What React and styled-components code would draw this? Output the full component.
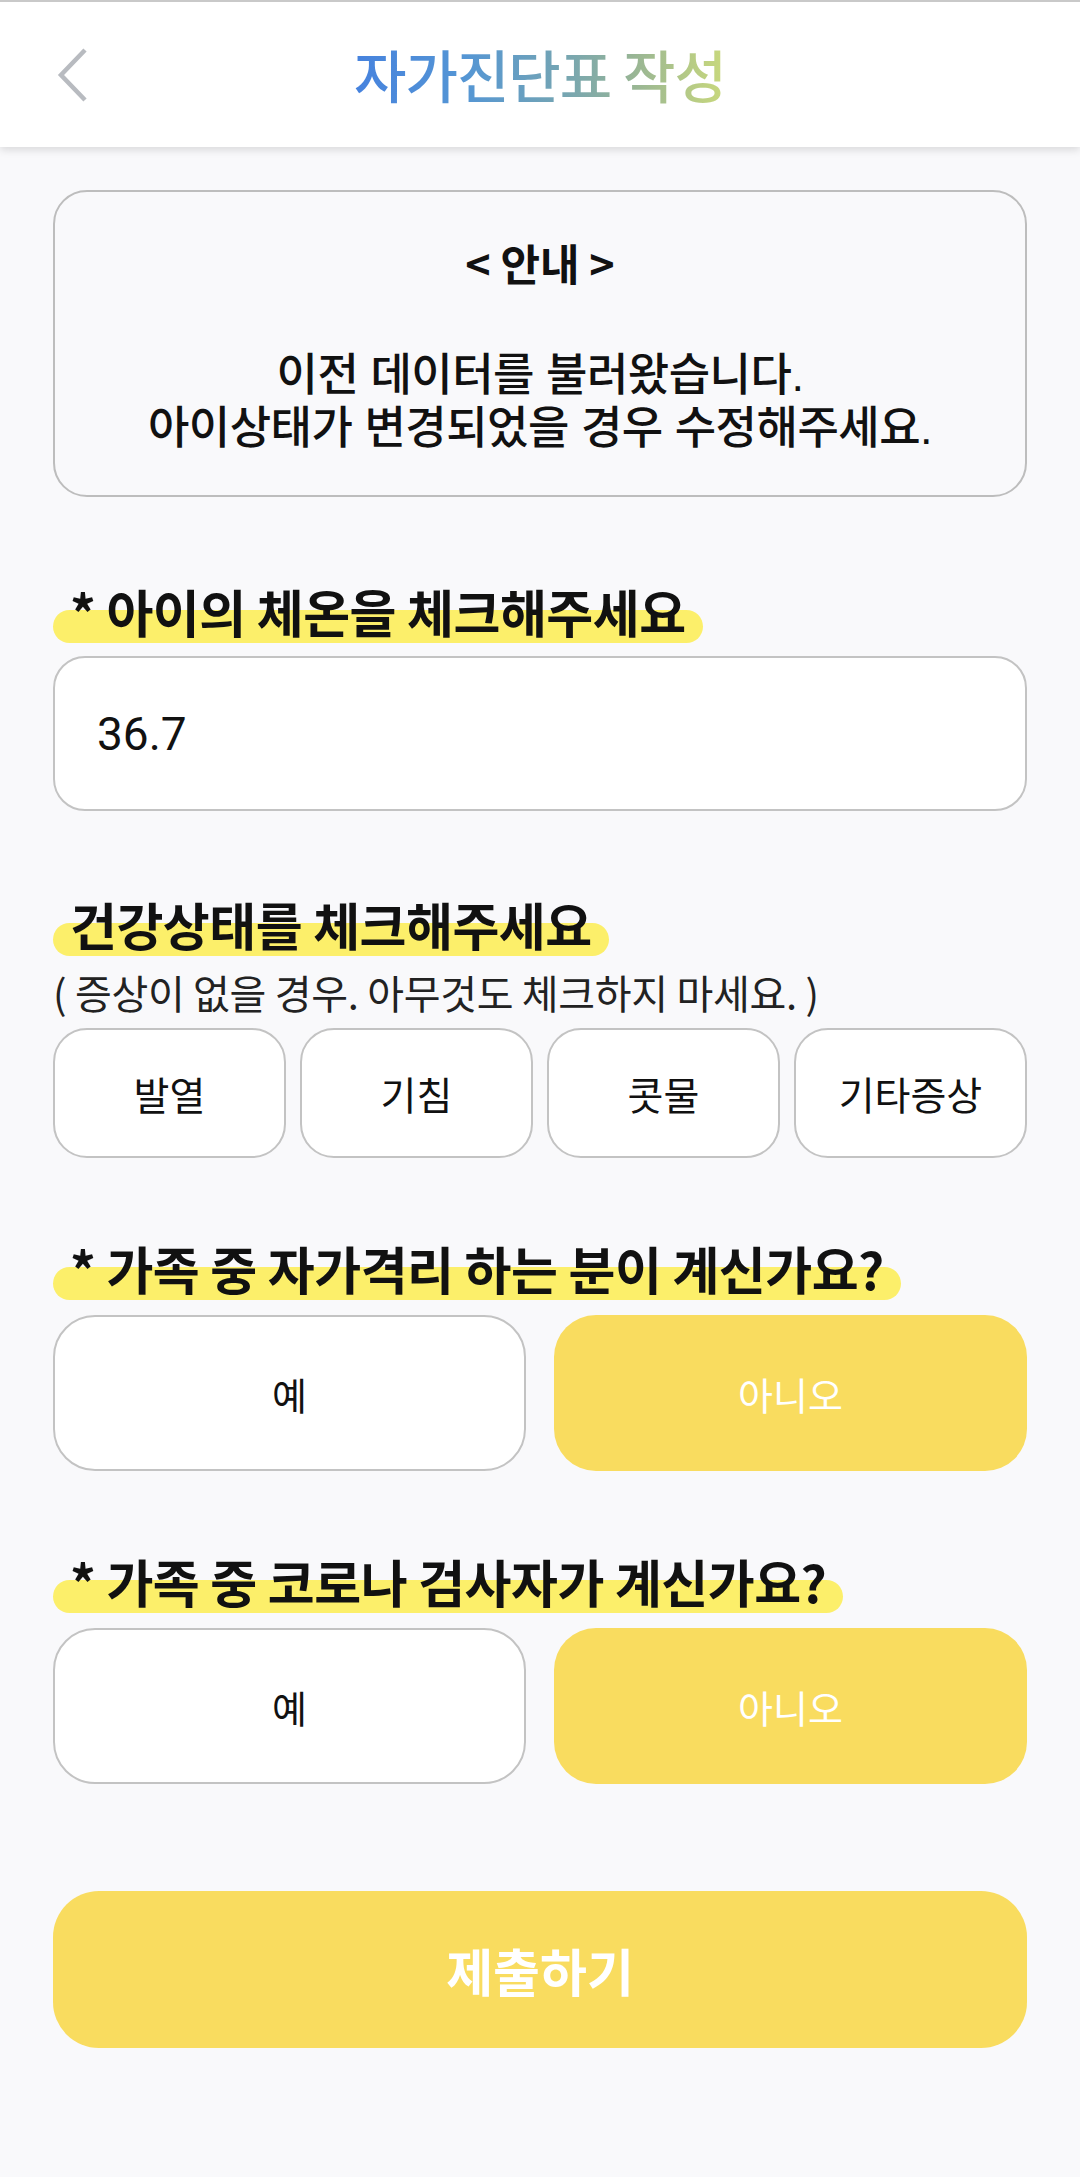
import React, { useState } from "react";
import styled, { createGlobalStyle } from "styled-components";

const GlobalStyle = createGlobalStyle`
  body {
    margin: 0;
    background: #f9f9fb;
    font-family: "Noto Sans CJK KR", "Noto Sans", sans-serif;
    color: #111;
  }
`;

const Page = styled.div`
  min-height: 2177px;
  background: #f9f9fb;
`;

const Header = styled.header`
  height: 145px;
  background: #fff;
  border-top: 2px solid #c9c9c9;
  box-shadow: 0 3px 8px rgba(0, 0, 0, 0.13);
  display: grid;
  grid-template-columns: 1fr auto 1fr;
  align-items: center;
`;

const BackButton = styled.button`
  justify-self: start;
  margin-left: 50px;
  padding: 4px;
  border: none;
  background: transparent;
  display: flex;
`;

const Title = styled.h1`
  margin: 0 0 4px;
  font-size: 57px;
  font-weight: 500;
  line-height: 66px;
  letter-spacing: -1px;
  background: linear-gradient(
    90deg,
    #4682de 0%,
    #5596d4 30%,
    #73a4b4 55%,
    #98b595 75%,
    #c9d97c 100%
  );
  -webkit-background-clip: text;
  background-clip: text;
  color: transparent;
`;

const Content = styled.main`
  padding: 43px 53px 0;
  display: flex;
  flex-direction: column;
`;

const Notice = styled.section`
  border: 2px solid #bdbdbd;
  border-radius: 34px;
  padding: 40px 10px 40px;
  text-align: center;
`;

const NoticeTitle = styled.div`
  font-size: 43px;
  font-weight: 700;
  line-height: 60px;
  margin-bottom: 53px;
`;

/* Liberation Sans first keeps the line boxes inside the 53px rows;
   the Hangul itself falls through to Noto Sans CJK. */
const NoticeBody = styled.div`
  padding-top: 4px;
  font-family: "Liberation Sans", "Noto Sans CJK KR", sans-serif;
  font-size: 45px;
  font-weight: 500;
  line-height: 53px;
  letter-spacing: -0.5px;
`;

const Section = styled.section`
  margin-top: ${props => props.gap}px;
  display: flex;
  flex-direction: column;
  align-items: flex-start;
`;

const Label = styled.h2`
  position: relative;
  z-index: 0;
  margin: 0;
  padding: 0 17px;
  font-size: 51px;
  font-weight: 700;
  line-height: 60px;
  letter-spacing: -0.5px;

  &::before {
    content: "";
    position: absolute;
    z-index: -1;
    left: 0;
    right: 0;
    top: 29px;
    height: 33px;
    border-radius: 17px;
    background: #fcef6a;
  }
`;

const Hint = styled.p`
  margin: 14px 0 0;
  font-size: 40px;
  line-height: 48px;
  color: #222;
  letter-spacing: -0.3px;
`;

const TempField = styled.div`
  box-sizing: border-box;
  align-self: stretch;
  margin-top: 15px;
  height: 155px;
  padding-left: 42px;
  display: flex;
  align-items: center;
  background: #fff;
  border: 2px solid #c3c3c3;
  border-radius: 32px;
  font-family: Roboto, "Noto Sans", sans-serif;
  font-size: 46px;
  color: #111;
`;

const ChipGrid = styled.div`
  align-self: stretch;
  margin-top: 12px;
  display: grid;
  grid-template-columns: repeat(4, 1fr);
  gap: 14px;
`;

const Chip = styled.button`
  box-sizing: border-box;
  height: 130px;
  background: ${props => (props.active ? "#f9dc5f" : "#fff")};
  border: 2px solid ${props => (props.active ? "#f9dc5f" : "#c3c3c3")};
  border-radius: 34px;
  font-family: inherit;
  font-size: 39px;
  color: ${props => (props.active ? "#fff" : "#111")};
  padding: 0;
`;

const ChoiceRow = styled.div`
  align-self: stretch;
  margin-top: 17px;
  display: grid;
  grid-template-columns: 1fr 1fr;
  gap: 28px;
`;

const Choice = styled.button`
  box-sizing: border-box;
  height: 156px;
  background: ${props => (props.selected ? "#f9dc5f" : "#fff")};
  border: ${props => (props.selected ? "none" : "2px solid #c3c3c3")};
  border-radius: 42px;
  font-family: inherit;
  font-size: 38px;
  color: ${props => (props.selected ? "#fff" : "#111")};
  padding: 0;
`;

const SubmitButton = styled.button`
  margin-top: 107px;
  height: 157px;
  border: none;
  border-radius: 46px;
  background: #f9dc5f;
  color: #fff;
  font-family: inherit;
  font-size: 51px;
  font-weight: 700;
`;

const BackIcon = () => (
  <svg width="34" height="56" viewBox="0 0 34 56" fill="none">
    <polyline
      points="31,3 7,28 31,53"
      stroke="#b8bbc0"
      strokeWidth="4.5"
      strokeLinecap="butt"
      strokeLinejoin="miter"
    />
  </svg>
);

const symptoms = ["발열", "기침", "콧물", "기타증상"];

const YesNo = ({ value, onChange }) => (
  <ChoiceRow>
    <Choice selected={value === "yes"} onClick={() => onChange("yes")}>
      예
    </Choice>
    <Choice selected={value === "no"} onClick={() => onChange("no")}>
      아니오
    </Choice>
  </ChoiceRow>
);

export default function App() {
  const [checked, setChecked] = useState([]);
  const [isolation, setIsolation] = useState("no");
  const [tested, setTested] = useState("no");

  const toggle = name => () =>
    setChecked(list =>
      list.includes(name) ? list.filter(el => el !== name) : [...list, name]
    );

  return (
    <Page>
      <GlobalStyle />
      <Header>
        <BackButton aria-label="뒤로">
          <BackIcon />
        </BackButton>
        <Title>자가진단표 작성</Title>
        <span />
      </Header>

      <Content>
        <Notice>
          <NoticeTitle>&lt; 안내 &gt;</NoticeTitle>
          <NoticeBody>
            이전 데이터를 불러왔습니다.
            <br />
            아이상태가 변경되었을 경우 수정해주세요.
          </NoticeBody>
        </Notice>

        <Section gap={84}>
          <Label>* 아이의 체온을 체크해주세요</Label>
          <TempField>36.7</TempField>
        </Section>

        <Section gap={83}>
          <Label>건강상태를 체크해주세요</Label>
          <Hint>( 증상이 없을 경우. 아무것도 체크하지 마세요. )</Hint>
          <ChipGrid>
            {symptoms.map(name => (
              <Chip
                key={name}
                active={checked.includes(name)}
                onClick={toggle(name)}
              >
                {name}
              </Chip>
            ))}
          </ChipGrid>
        </Section>

        <Section gap={80}>
          <Label>* 가족 중 자가격리 하는 분이 계신가요?</Label>
          <YesNo value={isolation} onChange={setIsolation} />
        </Section>

        <Section gap={80}>
          <Label>* 가족 중 코로나 검사자가 계신가요?</Label>
          <YesNo value={tested} onChange={setTested} />
        </Section>

        <SubmitButton>제출하기</SubmitButton>
      </Content>
    </Page>
  );
}
